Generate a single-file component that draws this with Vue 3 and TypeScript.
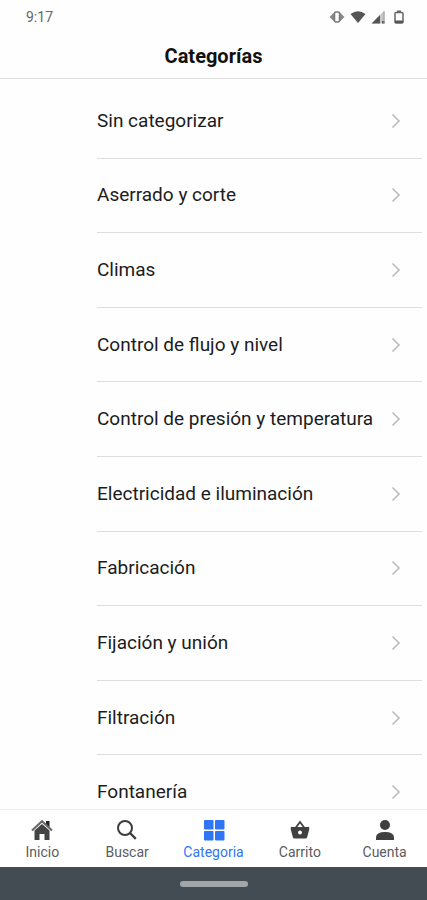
<script setup lang="ts">
import { ref } from 'vue'

type TabId = 'inicio' | 'buscar' | 'categoria' | 'carrito' | 'cuenta'

const categories: string[] = [
  'Sin categorizar',
  'Aserrado y corte',
  'Climas',
  'Control de flujo y nivel',
  'Control de presión y temperatura',
  'Electricidad e iluminación',
  'Fabricación',
  'Fijación y unión',
  'Filtración',
  'Fontanería',
]

const tabs: { id: TabId; label: string }[] = [
  { id: 'inicio', label: 'Inicio' },
  { id: 'buscar', label: 'Buscar' },
  { id: 'categoria', label: 'Categoria' },
  { id: 'carrito', label: 'Carrito' },
  { id: 'cuenta', label: 'Cuenta' },
]

const active = ref<TabId>('categoria')
</script>

<template>
  <div class="screen">
    <div class="status">
      <span>9:17</span>
      <div class="status-icons">
        <svg width="16" height="14" viewBox="0 0 16 14" aria-hidden="true">
          <path d="M5 2.500v9L.5 7zM11 2.500v9L15.500 7z" fill="#8a8a8a" />
          <rect x="5.500" y="2" width="5" height="10" rx="1.500" fill="#fff" stroke="#777" stroke-width="1.500" />
        </svg>
        <svg width="16" height="14" viewBox="0 0 16 14" aria-hidden="true">
          <path d="M.5 4Q8-1.500 15.500 4L8 13z" fill="#555" />
        </svg>
        <svg width="14" height="14" viewBox="0 0 14 14" aria-hidden="true">
          <path d="M13.500.5v13H.5z" fill="#c8c8c8" />
          <path d="M9 5v8.500H.5zM11 11h2.500v2.500H11z" fill="#555" />
          <path d="M13 1.500V13.500" stroke="#999" />
        </svg>
        <svg class="battery" width="10" height="14" viewBox="0 0 10 14" aria-hidden="true">
          <path d="M3 .5h4V2H3z" fill="#666" />
          <rect x="1" y="2.500" width="8" height="10.500" rx="1" fill="none" stroke="#666" stroke-width="1.500" />
          <path d="M1 10.500h8V13H1z" fill="#555" />
        </svg>
      </div>
    </div>

    <header class="header">
      <h1>Categorías</h1>
    </header>

    <main class="content">
      <ul class="list">
        <li v-for="category in categories" :key="category">
          <a class="row" href="#">
            <span>{{ category }}</span>
            <svg width="10" height="16" viewBox="0 0 10 16" aria-hidden="true">
              <path d="M1.500 1.500L8 8l-6.500 6.500" fill="none" stroke="#bdbdbd" stroke-width="1.700" />
            </svg>
          </a>
        </li>
      </ul>
    </main>

    <nav class="tabs">
      <button
        v-for="tab in tabs"
        :key="tab.id"
        type="button"
        class="tab"
        :class="{ active: tab.id === active }"
        @click="active = tab.id"
      >
        <svg width="22" height="22" viewBox="0 0 22 22" aria-hidden="true">
          <g v-if="tab.id === 'inicio'">
            <path d="M15 2h3.500v7L15 6z" fill="#222" />
            <path d="M3.500 11.500L11 5l7.500 6.500V21h-5v-6h-5v6h-5z" fill="#444" />
            <path d="M1 11.500l10-9.300 10 9.300" fill="none" stroke="#6a6a6a" stroke-width="2.200" />
          </g>
          <g v-else-if="tab.id === 'buscar'" fill="none" stroke="#3c3c3c">
            <circle cx="9" cy="9" r="7" stroke-width="2" />
            <path d="M14 14l5.800 5.800" stroke-width="2.400" />
          </g>
          <g v-else-if="tab.id === 'categoria'" fill="currentColor">
            <rect x="1" y="1" width="9.500" height="9.500" rx="1" />
            <rect x="12" y="1" width="9.500" height="9.500" rx="1" />
            <rect x="1" y="12" width="9.500" height="9.500" rx="1" />
            <rect x="12" y="12" width="9.500" height="9.500" rx="1" />
          </g>
          <g v-else-if="tab.id === 'carrito'">
            <path d="M6.500 9L11 3l4.500 6" fill="none" stroke="#444" stroke-width="1.900" />
            <path d="M1.800 8h18.400v2.500L18.200 18q-.4 1.500-1.900 1.500H5.700q-1.500 0-1.900-1.500l-2-7.500z" fill="#404040" />
            <circle cx="11" cy="13.500" r="2" fill="#fff" />
          </g>
          <g v-else fill="#404040">
            <circle cx="11" cy="6" r="5" />
            <path d="M2 21v-2.500Q2 13 11 13t9 5.500V21z" />
          </g>
        </svg>
        <span>{{ tab.label }}</span>
      </button>
    </nav>

    <div class="system-bar"><span class="pill"></span></div>
  </div>
</template>

<style>
body {
  margin: 0;
  background: #fff;
}
</style>

<style scoped>
.screen {
  display: flex;
  flex-direction: column;
  height: 100vh;
  font-family: Roboto, "Liberation Sans", sans-serif;
  color: #1c1c1c;
  background: #fefefe;
}

.status {
  display: flex;
  align-items: center;
  justify-content: space-between;
  height: 34px;
  padding: 0 23px 0 26px;
  font-size: 14px;
  line-height: 20px;
  color: #666;
}

.status-icons {
  display: flex;
  align-items: center;
  gap: 5px;
}

.battery {
  margin-left: 4px;
}

.header {
  display: flex;
  align-items: center;
  justify-content: center;
  height: 44px;
  border-bottom: 1px solid #dedede;
}

h1 {
  margin: 0;
  font-size: 20px;
  font-weight: 700;
  line-height: 24px;
  color: #111;
}

.content {
  flex: 1;
  min-height: 0;
  overflow: hidden;
}

/* The list runs on under the tab bar, so its last row is cut off. */
.list {
  box-sizing: border-box;
  display: grid;
  grid-auto-rows: minmax(72px, 1fr);
  height: calc(100% + 21px);
  margin: 0;
  padding: 5px 5px 0 97px;
  list-style: none;
}

.row {
  box-sizing: border-box;
  display: flex;
  align-items: center;
  justify-content: space-between;
  height: 100%;
  padding-right: 21px;
  border-bottom: 1px solid #dedede;
  font-size: 19px;
  line-height: 24px;
  color: inherit;
  text-decoration: none;
}

.tabs {
  display: grid;
  grid-template-columns: 1fr 1fr 88px 1fr 1fr;
  height: 57px;
  border-top: 1px solid #ececec;
  background: #fff;
}

.tab {
  display: flex;
  flex-direction: column;
  align-items: center;
  gap: 2px;
  padding: 9px 0 0;
  border: 0;
  background: none;
  font-family: inherit;
  font-size: 14px;
  line-height: 18px;
  color: #5c5c5c;
}

.tab.active {
  color: #2f75f5;
}

.system-bar {
  display: flex;
  align-items: center;
  justify-content: center;
  height: 33px;
  background: #444c53;
}

.pill {
  width: 68px;
  height: 6px;
  border-radius: 3px;
  background: #a3a6a9;
}
</style>
